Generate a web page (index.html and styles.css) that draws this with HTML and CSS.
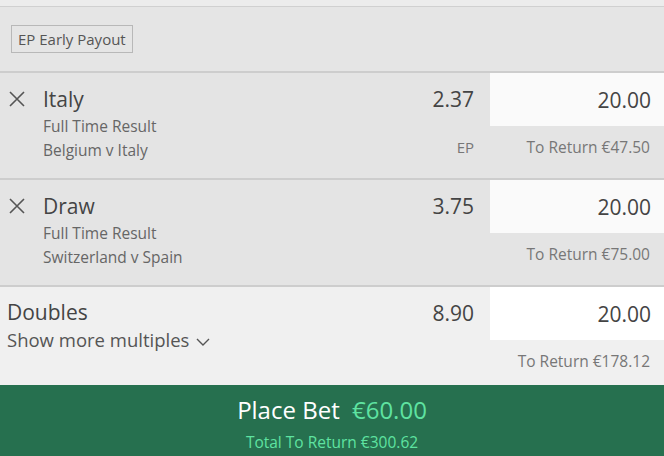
FILE: index.html
```html
<!DOCTYPE html>
<html lang="en">
<head>
    <meta charset="UTF-8">
    <meta name="viewport" content="width=device-width, initial-scale=1.0">
    <title>Bet Slip</title>
    <link rel="stylesheet" href="styles.css">
</head>
<body>

    <div class="top-strip"></div>

    <div class="slip-header">
        <span class="ep-tag">EP Early Payout</span>
    </div>

    <div class="selection">
        <div class="sel-main">
            <div class="sel-info">
                <svg class="remove" width="16" height="16" viewBox="0 0 16 16">
                    <path d="M1 1 L15 15 M15 1 L1 15" stroke="#555" stroke-width="1.6" fill="none"/>
                </svg>
                <div>
                    <div class="sel-name">Italy</div>
                    <div class="sel-market">Full Time Result</div>
                    <div class="sel-market">Belgium v Italy</div>
                </div>
            </div>
            <div class="sel-odds">
                <div class="odds">2.37</div>
                <div class="ep">EP</div>
            </div>
        </div>
        <div class="stake-col">
            <div class="stake">20.00</div>
            <div class="to-return">To Return €47.50</div>
        </div>
    </div>

    <div class="selection">
        <div class="sel-main">
            <div class="sel-info">
                <svg class="remove" width="16" height="16" viewBox="0 0 16 16">
                    <path d="M1 1 L15 15 M15 1 L1 15" stroke="#555" stroke-width="1.6" fill="none"/>
                </svg>
                <div>
                    <div class="sel-name">Draw</div>
                    <div class="sel-market">Full Time Result</div>
                    <div class="sel-market">Switzerland v Spain</div>
                </div>
            </div>
            <div class="sel-odds">
                <div class="odds">3.75</div>
            </div>
        </div>
        <div class="stake-col">
            <div class="stake">20.00</div>
            <div class="to-return">To Return €75.00</div>
        </div>
    </div>

    <div class="multiple">
        <div class="sel-main">
            <div class="multi-info">
                <div class="sel-name">Doubles</div>
                <div class="show-more">Show more multiples
                    <svg width="14" height="9" viewBox="0 0 14 9">
                        <path d="M1 1 L7 7 L13 1" stroke="#555" stroke-width="1.4" fill="none"/>
                    </svg>
                </div>
            </div>
            <div class="sel-odds">
                <div class="odds">8.90</div>
            </div>
        </div>
        <div class="stake-col">
            <div class="stake">20.00</div>
            <div class="to-return">To Return €178.12</div>
        </div>
    </div>

    <div class="place-bet">
        <div class="place-line">Place Bet <span class="amount">€60.00</span></div>
        <div class="total">Total To Return €300.62</div>
    </div>

</body>
</html>
```

FILE: styles.css
```css
body {
    font-family: "Open Sans", "Noto Sans", sans-serif;
    margin: 0;
    background-color: #e4e4e4;
    color: #444;
    width: 664px;
    height: 456px;
    overflow: hidden;
}
.top-strip {
    height: 6px;
    background-color: #ececec;
    border-bottom: 1px solid #d0d0d0;
}
.slip-header {
    height: 64px;
    display: flex;
    align-items: center;
    padding-left: 11px;
    background-color: #e5e5e5;
    border-bottom: 2px solid #cdcdcd;
}
.ep-tag {
    border: 1px solid #b8b8b8;
    padding: 3px 6px 3px 6px;
    font-size: 15px;
    color: #555;
}
.selection {
    display: flex;
    height: 105px;
    border-bottom: 2px solid #cdcdcd;
    background-color: #e4e4e4;
}
.sel-main {
    flex: 1;
    display: flex;
    justify-content: space-between;
    padding-right: 16px;
}
.sel-info {
    display: flex;
    padding-top: 12px;
}
.remove {
    margin: 6px 18px 0 9px;
}
.sel-name {
    font-size: 21px;
    color: #444;
    line-height: 28px;
    margin-bottom: 1px;
}
.sel-market {
    font-size: 15.5px;
    color: #666;
    line-height: 24px;
}
.sel-odds {
    text-align: right;
    padding-top: 12px;
}
.odds {
    font-size: 21px;
    line-height: 28px;
    color: #444;
}
.ep {
    font-size: 15px;
    color: #777;
    margin-top: 24px;
}
.stake-col {
    width: 174px;
    display: flex;
    flex-direction: column;
}
.stake {
    background-color: #fafafa;
    height: 53px;
    display: flex;
    align-items: center;
    justify-content: flex-end;
    padding-right: 13px;
    font-size: 21px;
    color: #444;
}
.to-return {
    text-align: right;
    padding-right: 14px;
    margin-top: 10px;
    font-size: 15.5px;
    color: #777;
}
.multiple {
    display: flex;
    height: 98px;
    background-color: #f0f0f0;
}
.multiple .stake {
    background-color: #ffffff;
}
.multiple .sel-name {
    margin-bottom: 0;
}
.multiple .to-return {
    margin-top: 10px;
}
.multi-info {
    padding: 11px 0 0 7px;
}
.show-more {
    font-size: 18.5px;
    color: #555;
    margin-top: 1px;
}
.show-more svg {
    margin-left: 2px;
}
.place-bet {
    height: 71px;
    background-color: #26704f;
    text-align: center;
    color: #fff;
}
.place-line {
    font-size: 24px;
    padding-top: 9px;
    line-height: 32px;
}
.amount {
    color: #5ee3a1;
    margin-left: 6px;
}
.total {
    font-size: 15.5px;
    color: #5ee3a1;
    margin-top: 5px;
}
```
